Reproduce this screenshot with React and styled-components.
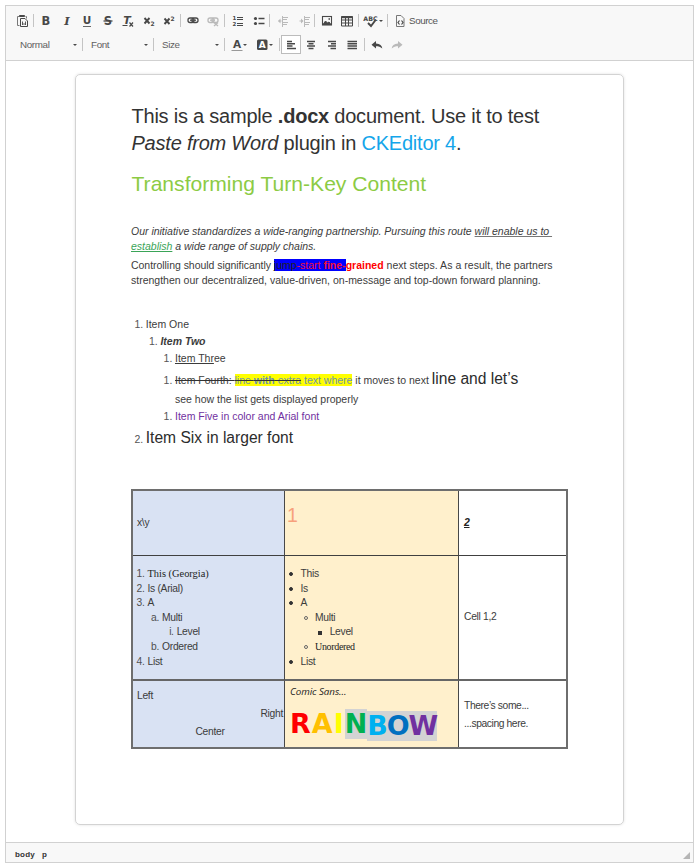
import React from 'react';
import styled, { createGlobalStyle, css } from 'styled-components';

const GlobalStyle = createGlobalStyle`
  * { box-sizing: border-box; }
  body { margin: 0; background: #fff; font-family: "Liberation Sans", Arial, sans-serif; color: #333; }
`;

const Editor = styled.div`
  display: flex;
  flex-direction: column;
  width: 689px;
  height: 858px;
  margin: 5px 0 0 5px;
  border: 1px solid #d1d1d1;
`;
const Toolbar = styled.div`
  flex: none;
  height: 55px;
  padding: 4px 6px 0;
  background: #f8f8f8;
  border-bottom: 1px solid #d1d1d1;
`;
const ToolRow = styled.div`
  display: flex;
  align-items: center;
  height: ${p => p.$h}px;
`;
const Tool = styled.div`
  flex: none;
  display: flex;
  align-items: center;
  justify-content: ${p => (p.$menu ? 'flex-start' : 'center')};
  padding-left: ${p => p.$pad || 0}px;
  width: ${p => p.$w || 20}px;
  height: 19px;
  color: #484848;
  opacity: ${p => (p.$off ? 0.35 : 1)};
  ${p => p.$active && css`background: #fff; border: 1px solid #bcbcbc;`}
`;
const Divider = styled.i`
  flex: none;
  width: 1px;
  height: 13px;
  margin: 0 ${p => p.$r ?? 2}px 0 1px;
  background: #c4c4c4;
`;
const Combo = styled.div`
  flex: none;
  display: flex;
  align-items: center;
  justify-content: space-between;
  width: 69px;
  height: 19px;
  padding: 0 4px 0 8px;
  color: #606060;
  font-size: 9.8px;
  letter-spacing: -0.35px;
`;
const Arrow = styled.i`
  flex: none;
  margin-left: ${p => p.$shift || 0}px;
  border: 2px solid transparent;
  border-top-color: #484848;
  border-bottom: 0;
`;
const SourceLabel = styled.span`
  margin-left: -1px;
  color: #555;
  font-size: 9.8px;
  letter-spacing: -0.4px;
`;
const Canvas = styled.div`
  flex: 1;
  padding: 13px 0 0 69px;
`;
const Sheet = styled.div`
  width: 549px;
  height: 751px;
  padding: 28px 55px 0;
  border: 1px solid #d3d3d3;
  border-radius: 5px;
  box-shadow: 0 0 3px rgba(0, 0, 0, 0.12);
  white-space: pre;
`;
const Title = styled.h1`
  margin: 0;
  padding-left: 0.5px;
  font-size: 20px;
  letter-spacing: -0.22px;
  font-weight: 400;
  line-height: 27px;
`;
const Subtitle = styled.h2`
  margin: 14px 0 27px;
  padding-left: 0.5px;
  color: #8ccb44;
  font-size: 21.1px;
  font-weight: 400;
  line-height: 26px;
`;
const Paragraph = styled.p`
  margin: 0 0 5px;
  font-size: 10.5px;
  line-height: 14.5px;
  color: #3c3c3c;
  font-style: ${p => (p.$italic ? 'italic' : 'normal')};
  letter-spacing: ${p => (p.$italic ? '-0.01px' : 'normal')};
`;
const Ink = styled.span`
  color: ${p => p.$c};
`;
const Tight = styled.span`
  letter-spacing: -0.04px;
`;
const Loose = styled.span`
  letter-spacing: 0.04px;
`;
const Underlined = styled.u`
  color: ${p => p.$c || 'inherit'};
  text-decoration-color: ${p => p.$line || 'currentColor'};
  text-underline-offset: 1px;
`;
const BlueMark = styled.mark`
  background: #0000ff;
  color: #222;
`;
const YellowMark = styled.mark`
  background: #ffff00;
  color: #6f94a8;
`;
const Struck = styled.s`
  text-decoration-color: #333;
`;
const Outline = styled.div`
  margin: 29px 0 39px;
`;
const OutlineItem = styled.div`
  display: flex;
  height: ${p => p.$h || 17}px;
  margin-top: ${p => p.$gap || 0}px;
  padding-left: ${p => 3.4 + p.$level * 14.6}px;
  font-size: 10.5px;
  line-height: ${p => p.$h || 17}px;
  align-items: baseline;
  color: #3c3c3c;
`;
const Marker = styled.span`
  flex: none;
  width: 11.4px;
  color: #555;
`;
const Large = styled.span`
  font-size: 15.6px;
  color: #2c2c2c;
`;
const Table = styled.div`
  display: grid;
  grid-template-columns: 152px 174px 107px;
  grid-template-rows: 65px 125px 66px;
  width: 437px;
  border: 2px solid #6e6e6e;
`;
const Cell = styled.div`
  display: flex;
  flex-direction: column;
  justify-content: ${p => (p.$top ? 'flex-start' : 'center')};
  padding: ${p => p.$top || 0}px 0 0 ${p => p.$left ?? 4}px;
  background: ${p => p.$bg || '#fff'};
  border-right: ${p => (p.$last ? 0 : 1)}px solid #484848;
  border-bottom: ${p => (p.$end ? 0 : p.$rule || 1)}px solid ${p => (p.$rule ? '#666' : '#404040')};
  font-size: 10.3px;
  letter-spacing: ${p => (p.$end && p.$last ? -0.4 : -0.3)}px;
  line-height: ${p => p.$lh || 14.6}px;
  color: #3c3c3c;
`;
const CellItem = styled.div`
  display: flex;
  align-items: center;
  padding-left: ${p => p.$level * 14.6}px;
`;
const Ordinal = styled.span`
  width: 14.5px;
  padding-right: 3px;
  text-align: right;
  color: #505050;
`;
const Bullet = styled.i`
  flex: none;
  width: 4px;
  height: 4px;
  margin: 0 7.5px 0 4px;
  border: 1px solid ${p => (p.$hollow ? '#666' : '#333')};
  background: ${p => (p.$hollow ? 'transparent' : '#333')};
  border-radius: ${p => (p.$square ? 0 : 2)}px;
`;
const Serif = styled.span`
  font-family: "Liberation Serif", Georgia, serif;
  font-size: ${p => p.$s}px;
  letter-spacing: ${p => p.$track || 0}px;
  color: #222;
`;
const Aligned = styled.div`
  text-align: ${p => p.$a};
  padding-right: 1px;
`;
const Handwritten = styled.div`
  padding-left: 1px;
  font: italic 9.8px/14px "Open Sans", sans-serif;
  letter-spacing: -0.05px;
  color: #222;
`;
const HeadOne = styled.span`
  font-size: 19.5px;
  line-height: 20px;
  color: #f7a07c;
  padding-bottom: 16px;
`;
const HeadTwo = styled.u`
  font-weight: 700;
  font-style: italic;
  font-size: 10.5px;
  padding-bottom: 1px;
  color: #222;
`;
const Rainbow = styled.div`
  display: flex;
  margin: 10px 0 0 1px;
  font: bold 26.9px/30px "DejaVu Sans", Verdana, sans-serif;
`;
const Letter = styled.span`
  height: 30px;
  margin-top: ${p => (p.$low ? 2 : 0)}px;
  line-height: 30px;
  letter-spacing: ${p => (p.$low ? -1.1 : p.$shade ? 0 : 1.1)}px;
  color: ${p => p.$c};
  background: ${p => (p.$shade ? '#d3d3d3' : 'transparent')};
`;
const StatusBar = styled.div`
  flex: none;
  display: flex;
  justify-content: space-between;
  height: 20px;
  padding: 0 3px 0 9px;
  border-top: 1px solid #d1d1d1;
  background: #f8f8f8;
`;
const PathItem = styled.b`
  display: inline-block;
  margin-right: 7px;
  font-size: 8px;
  line-height: 19px;
  letter-spacing: 0.2px;
  color: #333;
`;
const Grip = styled.i`
  align-self: flex-end;
  width: 0;
  height: 0;
  margin-bottom: 3px;
  border-left: 7px solid transparent;
  border-bottom: 7px solid #b5b5b5;
`;

const Glyph = ({ children }) => (
  <svg width="16" height="16" viewBox="0 0 16 16" fill="none" stroke="currentColor" strokeWidth="1">{children}</svg>
);
const T = ({ children, x = 8, y = 12, size = 12, ...rest }) => (
  <text x={x} y={y} fontSize={size} textAnchor="middle" fontFamily="DejaVu Sans" fontWeight="bold" fill="currentColor" stroke="none" {...rest}>{children}</text>
);

const icons = {
  paste: <><path d="M5.5 3.5h-2v9h2M11.5 3.5h1v2" stroke="#777" /><path d="M5.5 2.500h5v1h-5z" fill="currentColor" /><path d="M6.500 5.500h4.500l2.500 2.500v5.500h-7z" /><path d="M8.500 8.500v3.500l1.500-1.500 1.500 1.500V8.500" strokeWidth="0.900" /></>,
  bold: <T size={11.5}>B</T>,
  italic: <T size={11.5} fontFamily="DejaVu Serif" fontStyle="italic">I</T>,
  underline: <><T size={10.5} y={11}>U</T><path d="M4 13.500h8" stroke="#666" /></>,
  strike: <><T size={11.5}>S</T><path d="M3.500 8h9" strokeWidth="1.300" /></>,
  clear: <><T size={11} x={7} y={11} fontStyle="italic">T</T><path d="M2.500 12.500h5" /><path d="M9.500 9.500l3.500 4M13 9.500l-3.500 4" strokeWidth="1.200" /></>,
  sub: <><path d="M3.500 5l5 5.500M8.500 5l-5 5.500" strokeWidth="1.900" /><T size={6} x={11.500} y={13}>2</T></>,
  sup: <><path d="M3.500 5.500l5 5.500M8.500 5.500l-5 5.500" strokeWidth="1.900" /><T size={6} x={11.500} y={8}>2</T></>,
  link: <><rect x="3" y="5" width="6" height="4.500" rx="2" strokeWidth="1.300" /><rect x="7" y="5" width="6" height="4.500" rx="2" strokeWidth="1.300" /><path d="M5 7.200h6" strokeWidth="1.300" /></>,
  unlink: <><rect x="3" y="5" width="6" height="4.500" rx="2" strokeWidth="1.300" /><rect x="7" y="5" width="6" height="4.500" rx="2" strokeWidth="1.300" /><path d="M5 7.200h5" strokeWidth="1.300" /><path d="M9 9.500l4 3.500M13 9.500l-4 3.500" strokeWidth="1.300" /></>,
  ol: <><path d="M7 4.500h6M7 6.500h6M7 10.500h6M7 12.500h6" /><T size={5.5} x={4.500} y={7}>1</T><T size={5.5} x={4.500} y={13}>2</T></>,
  ul: <><circle cx="4.500" cy="5.500" r="1.600" fill="currentColor" stroke="none" /><circle cx="4.500" cy="10.500" r="1.600" fill="currentColor" stroke="none" /><path d="M7.500 5.500h6M7.500 10.500h6" strokeWidth="1.700" /></>,
  outdent: <><path d="M8 4.500h5M8 6.500h4M8 9.500h5M8 11.500h4M7.500 3v11M3.500 8h3" /><path d="M5.500 5.500L3 8l2.500 2.500z" fill="currentColor" stroke="none" /></>,
  indent: <><path d="M9 4.500h5M9 6.500h4M9 9.500h5M9 11.500h4M8.500 3v11M3.500 8h3" /><path d="M5 5.500L7.500 8 5 10.500z" fill="currentColor" stroke="none" /></>,
  image: <><rect x="3.500" y="3.500" width="9" height="8.500" strokeWidth="1.100" /><path d="M4 11.500l2.500-3.500 2 2 1.500-1 2 2.500z" fill="currentColor" /><path d="M9.500 6h1.500" strokeWidth="1.700" /></>,
  table: <><path d="M2.500 3.500h11v9.500h-11zM2.500 7h11M2.500 10h11M6.500 5v8M9.500 5v8" /><path d="M2.500 4.200h11" strokeWidth="2" /></>,
  spell: <><T size={6.3} x={7.500} y={7.500}>ABC</T><path d="M5 10l3 3 5-6.500" strokeWidth="1.900" /></>,
  source: <><path d="M4.500 2.500h4.500l3 3v8h-7.500z" stroke="#777" /><path d="M7.500 7.500L6 9.500l1.500 2M9.500 7.500l1.500 2-1.500 2" strokeWidth="1.200" /></>,
  color: <><T size={10.5} y={11}>A</T><path d="M2.500 13.500h11" stroke="#999" /></>,
  bg: <><rect x="3" y="2.500" width="10.500" height="10.500" rx="1.500" fill="currentColor" stroke="none" /><T size={9} x={8.200} y={11.200} fill="#fff">A</T></>,
  left: <path d="M4 4.500h5M4 6.800h8M4 9.100h5.500M4 11.400h9" strokeWidth="1.500" />,
  center: <path d="M4 4.500h8M5.500 6.800h5M4 9.100h8M5.500 11.400h5" strokeWidth="1.500" />,
  right: <path d="M5 4.500h8M8 6.800h5M5 9.100h8M7.500 11.400h5.500" strokeWidth="1.500" />,
  justify: <path d="M3.500 4.500h9.500M3.500 6.800h9.500M3.500 9.100h9.500M3.500 11.400h9.500" strokeWidth="1.500" />,
  undo: <path d="M2.500 7.700L7 4v2.400c4 .2 6 2 6.300 5.200C11.500 9.700 9.500 9.200 7 9.200v2.300z" fill="currentColor" stroke="none" />,
  redo: <path d="M13.500 7.700L9 4v2.400c-4 .2-6 2-6.300 5.200C4.500 9.700 6.500 9.200 9 9.200v2.300z" fill="currentColor" stroke="none" />,
};
const Button = ({ icon, shift, ...rest }) => (
  <Tool {...rest}><Glyph>{icons[icon]}</Glyph>{rest.$menu && <Arrow $shift={shift} />}</Tool>
);

const orderedRows = [
  [0, '1.', <Serif $s={10.4}>This (Georgia)</Serif>], [0, '2.', 'Is (Arial)'], [0, '3.', 'A'], [1, 'a.', 'Multi'],
  [2, 'i.', 'Level'], [1, 'b.', 'Ordered'], [0, '4.', 'List'],
];
const bulletRows = [
  [0, 'This'], [0, 'Is'], [0, 'A'], [1, 'Multi'], [2, 'Level'], [1, <Serif $s={10} $track={-0.35}>Unordered</Serif>], [0, 'List'],
];
const rainbow = [
  ['R', '#ff0000'], ['A', '#ffc000'], ['I', '#ffff00'], ['N', '#00b050', 1], ['B', '#00b0f0', 1, 1], ['O', '#0070c0', 1, 1], ['W', '#7030a0', 1, 1],
];
const BLUE = '#d9e2f3';
const CREAM = '#fff0cc';

export default function App() {
  return (
    <>
      <GlobalStyle />
      <Editor>
        <Toolbar>
          <ToolRow $h={21}>
            <Button icon="paste" /><Divider />
            <Button icon="bold" /><Button icon="italic" $w={21} /><Button icon="underline" /><Button icon="strike" $w={21} />
            <Button icon="clear" /><Button icon="sub" $w={21} /><Button icon="sup" /><Divider $r={1} />
            <Button icon="link" $w={21} /><Button icon="unlink" $off /><Divider />
            <Button icon="ol" $w={22} /><Button icon="ul" $w={19} /><Divider />
            <Button icon="outdent" $w={22} $off /><Button icon="indent" $w={19} $off /><Divider />
            <Button icon="image" /><Button icon="table" /><Divider />
            <Button icon="spell" $w={25} $pad={2} $menu /><Divider />
            <Button icon="source" /><SourceLabel>Source</SourceLabel>
          </ToolRow>
          <ToolRow $h={27}>
            <Combo>Normal<Arrow /></Combo><Divider $r={0} />
            <Combo>Font<Arrow /></Combo><Divider $r={0} />
            <Combo>Size<Arrow /></Combo><Divider $r={4} />
            <Button icon="color" $w={25} shift={-2} $menu /><Button icon="bg" $w={24} shift={-1} $menu /><Divider $r={1} />
            <Button icon="left" $active /><Button icon="center" /><Button icon="right" /><Button icon="justify" $w={22} /><Divider />
            <Button icon="undo" /><Button icon="redo" $off />
          </ToolRow>
        </Toolbar>
        <Canvas>
          <Sheet>
            <Title>
              This is a sample <b>.docx</b> document. Use it to test<br />
              <em>Paste from Word</em> plugin in <Ink $c="#14a5ea">CKEditor 4</Ink>.
            </Title>
            <Subtitle>Transforming Turn-Key Content</Subtitle>
            <Paragraph $italic>
              Our initiative standardizes a wide-ranging partnership. Pursuing this route <Underlined $line="#777">will enable us to </Underlined><br />
              <Underlined $c="#3aa457">establish</Underlined> a wide range of supply chains.
            </Paragraph>
            <Paragraph>
              <Tight>Controlling should significantly </Tight><BlueMark>jump<Ink $c="#f0103c">-start <b>fine-</b></Ink></BlueMark><Ink $c="#ff0000"><b>grained</b></Ink><Loose> next steps. As a result, the partners</Loose><br />
              strengthen our decentralized, value-driven, on-message and top-down forward planning.
            </Paragraph>
            <Outline>
              <OutlineItem $level={0}><Marker>1.</Marker><span>Item One</span></OutlineItem>
              <OutlineItem $level={1}><Marker>1.</Marker><b><em>Item Two</em></b></OutlineItem>
              <OutlineItem $level={2}><Marker>1.</Marker><span><Underlined>Item Thr</Underlined>ee</span></OutlineItem>
              <OutlineItem $level={2} $h={23}>
                <Marker>1.</Marker>
                <span><Struck>Item Fourth: </Struck><YellowMark><Struck>line <b>with</b> extra</Struck> text where</YellowMark> it moves to next <Large>line and let’s</Large></span>
              </OutlineItem>
              <OutlineItem $level={2} $h={15} $gap={2}><Marker /><span>see how the list gets displayed properly</span></OutlineItem>
              <OutlineItem $level={2} $gap={1}><Marker>1.</Marker><Ink $c="#7030a0">Item Five in color and Arial font</Ink></OutlineItem>
              <OutlineItem $level={0} $h={24} $gap={1}><Marker>2.</Marker><Large>Item Six in larger font</Large></OutlineItem>
            </Outline>
            <Table>
              <Cell $bg={BLUE}>x\y</Cell>
              <Cell $bg={CREAM} $left={2}><HeadOne>1</HeadOne></Cell>
              <Cell $last $left={5}><HeadTwo>2</HeadTwo></Cell>
              <Cell $bg={BLUE} $top={11} $left={0} $rule={2}>
                {orderedRows.map(([level, mark, text], i) => <CellItem key={i} $level={level}><Ordinal>{mark}</Ordinal>{text}</CellItem>)}
              </Cell>
              <Cell $bg={CREAM} $top={11} $left={0} $rule={2}>
                {bulletRows.map(([level, text], i) => (
                  <CellItem key={i} $level={level}><Bullet $hollow={level === 1} $square={level === 2} />{text}</CellItem>
                ))}
              </Cell>
              <Cell $last $left={5} $rule={2}>Cell 1,2</Cell>
              <Cell $bg={BLUE} $top={6} $lh={18.2} $end>
                <Aligned $a="left">Left</Aligned><Aligned $a="right">Right</Aligned><Aligned $a="center">Center</Aligned>
              </Cell>
              <Cell $bg={CREAM} $top={4} $end>
                <Handwritten>Comic Sans...</Handwritten>
                <Rainbow>{rainbow.map(([ch, c, shade, low]) => <Letter key={ch} $c={c} $shade={shade} $low={low}>{ch}</Letter>)}</Rainbow>
              </Cell>
              <Cell $last $top={16} $left={5} $lh={18.2} $end><div>There’s some...</div><div>...spacing here.</div></Cell>
            </Table>
          </Sheet>
        </Canvas>
        <StatusBar><span><PathItem>body</PathItem><PathItem>p</PathItem></span><Grip /></StatusBar>
      </Editor>
    </>
  );
}
